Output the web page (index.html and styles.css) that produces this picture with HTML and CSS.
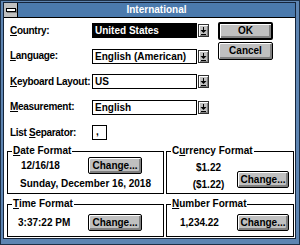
FILE: index.html
```html
<!DOCTYPE html>
<html lang="en">
<head>
    <meta charset="UTF-8">
    <meta name="viewport" content="width=device-width, initial-scale=1.0">
    <title>International</title>
    <link rel="stylesheet" href="styles.css">
</head>
<body>
    <div class="window">
        <div class="inner">
            <div class="titlebar">
                <div class="sysmenu"><span class="sysbar"></span></div>
                <div class="title">International</div>
            </div>
            <div class="client">
                <div class="top">
                    <div class="form">
                        <span class="label"><span class="key">C</span>ountry:</span>
                        <div class="combo">
                            <div class="field selected">United States</div>
                            <div class="arrow"><svg width="9" height="11" viewBox="0 0 9 11"><rect x="4" y="2" width="1" height="3"/><polygon points="1.5,5 7.5,5 4.5,8"/><rect x="2" y="9" width="5" height="1"/></svg></div>
                        </div>
                        <span class="label"><span class="key">L</span>anguage:</span>
                        <div class="combo">
                            <div class="field">English (American)</div>
                            <div class="arrow"><svg width="9" height="11" viewBox="0 0 9 11"><rect x="4" y="2" width="1" height="3"/><polygon points="1.5,5 7.5,5 4.5,8"/><rect x="2" y="9" width="5" height="1"/></svg></div>
                        </div>
                        <span class="label"><span class="key">K</span>eyboard Layout:</span>
                        <div class="combo">
                            <div class="field">US</div>
                            <div class="arrow"><svg width="9" height="11" viewBox="0 0 9 11"><rect x="4" y="2" width="1" height="3"/><polygon points="1.5,5 7.5,5 4.5,8"/><rect x="2" y="9" width="5" height="1"/></svg></div>
                        </div>
                        <span class="label"><span class="key">M</span>easurement:</span>
                        <div class="combo">
                            <div class="field">English</div>
                            <div class="arrow"><svg width="9" height="11" viewBox="0 0 9 11"><rect x="4" y="2" width="1" height="3"/><polygon points="1.5,5 7.5,5 4.5,8"/><rect x="2" y="9" width="5" height="1"/></svg></div>
                        </div>
                        <span class="label">List <span class="key">S</span>eparator:</span>
                        <div class="sep">,</div>
                    </div>
                    <div class="actions">
                        <button class="btn default">OK</button>
                        <button class="btn">Cancel</button>
                    </div>
                </div>
                <div class="groups">
                    <fieldset class="group">
                        <legend><span class="key">D</span>ate Format</legend>
                        <div class="date-row">
                            <span class="date-value">12/16/18</span>
                            <button class="btn change">Change...</button>
                        </div>
                        <div class="long-date">Sunday, December 16, 2018</div>
                    </fieldset>
                    <fieldset class="group">
                        <legend>C<span class="key">u</span>rrency Format</legend>
                        <div class="money-row">
                            <div class="money">
                                <div>$1.22</div>
                                <div class="neg">($1.22)</div>
                            </div>
                            <button class="btn change narrow">Change...</button>
                        </div>
                    </fieldset>
                    <fieldset class="group">
                        <legend><span class="key">T</span>ime Format</legend>
                        <div class="time-row">
                            <span class="time-value">3:37:22 PM</span>
                            <button class="btn change">Change...</button>
                        </div>
                    </fieldset>
                    <fieldset class="group">
                        <legend><span class="key">N</span>umber Format</legend>
                        <div class="num-row">
                            <span class="num-value">1,234.22</span>
                            <button class="btn change narrow">Change...</button>
                        </div>
                    </fieldset>
                </div>
            </div>
        </div>
    </div>
</body>
</html>
```

FILE: styles.css
```css
/* Base */
* {
    margin: 0;
    padding: 0;
    box-sizing: border-box;
    font-family: 'Liberation Sans', Arial, sans-serif;
    font-size: 10px;
    font-weight: bold;
}

body {
    background: #fff;
}

.key {
    text-decoration: underline;
    text-underline-offset: 1px;
}

/* Window frame */
.window {
    width: 300px;
    height: 245px;
    border: 1px solid #1d3047;
    background: #5e85b2;
    padding: 1px 3px 5px 2px;
}

.inner {
    height: 100%;
    border: 1px solid #15243a;
    display: flex;
    flex-direction: column;
}

.titlebar {
    height: 15px;
    display: flex;
    background: #4b7aad;
    border-bottom: 1px solid #000;
}

.sysmenu {
    width: 14px;
    background: #c0c0c0;
    border-right: 1px solid #000;
    display: flex;
    align-items: center;
    justify-content: center;
}

.sysbar {
    width: 10px;
    height: 4px;
    border: 1px solid #000;
    background: #fff;
    box-shadow: 1px 1px 0 #808080;
}

.title {
    flex: 1;
    color: #fff;
    text-align: center;
    line-height: 14px;
}

.client {
    flex: 1;
    background: #fff;
}

/* Top part */
.top {
    display: flex;
    padding: 4px 0 0 6px;
}

.form {
    margin-top: 1px;
    display: grid;
    grid-template-columns: 82px 117px;
    grid-auto-rows: 15px;
    row-gap: 10.5px;
    align-items: center;
}

.label {
    line-height: 12px;
    white-space: nowrap;
    letter-spacing: -0.3px;
}

.combo {
    display: flex;
    align-items: center;
    height: 15px;
}

.field {
    width: 105px;
    height: 15px;
    border: 1px solid #000;
    padding-left: 2px;
    line-height: 13px;
    white-space: nowrap;
}

.field.selected {
    background: #000;
    color: #fff;
}

.arrow {
    margin-left: 1px;
    width: 11px;
    height: 13px;
    border: 1px solid #303030;
    background: #c0c0c0;
    box-shadow: inset 1px 1px 0 #fff, inset -1px -1px 0 #808080;
    display: flex;
}

.sep {
    width: 15px;
    height: 15px;
    border: 1px solid #000;
    padding-left: 3px;
    line-height: 12px;
}

.actions {
    margin-left: 9px;
    width: 55px;
    display: flex;
    flex-direction: column;
    gap: 2px;
}

/* Buttons */
.btn {
    height: 18px;
    border: 1px solid #000;
    border-radius: 2px;
    background: #c0c0c0;
    box-shadow: inset 1px 1px 0 #fff, inset -2px -2px 0 #808080;
    color: #000;
    padding: 0 0 1px 0;
}

.btn.default {
    border-width: 2px;
}

.change {
    width: 54px;
    height: 17px;
}

.change.narrow {
    width: 52px;
}

/* Group boxes */
.groups {
    margin-top: 6px;
    padding-left: 3px;
    display: grid;
    grid-template-columns: 157px 128px;
    column-gap: 2px;
    row-gap: 5px;
}

.group {
    border: 1px solid #000;
    min-width: 0;
}

.group legend {
    margin-left: 4px;
    padding: 0 1px;
    line-height: 10px;
}

.date-row {
    display: flex;
    align-items: center;
    margin-top: 1px;
    padding-left: 13px;
}

.date-value {
    width: 67px;
}

.long-date {
    margin-top: 4px;
    padding: 0 0 2px 12px;
    line-height: 12px;
    white-space: nowrap;
}

.money-row {
    display: flex;
    align-items: flex-start;
    padding-bottom: 2px;
}

.money {
    margin: 6px 0 0 13px;
    width: 57px;
    text-align: center;
    line-height: 12px;
}

.money .neg {
    margin-top: 5px;
}

.money-row .btn {
    margin-top: 15px;
}

.time-row,
.num-row {
    display: flex;
    align-items: center;
    margin-top: 5px;
    padding-bottom: 5px;
}

.time-row {
    padding-left: 10px;
}

.time-value {
    width: 70px;
}

.num-value {
    margin-left: 13px;
    width: 57px;
}
```
